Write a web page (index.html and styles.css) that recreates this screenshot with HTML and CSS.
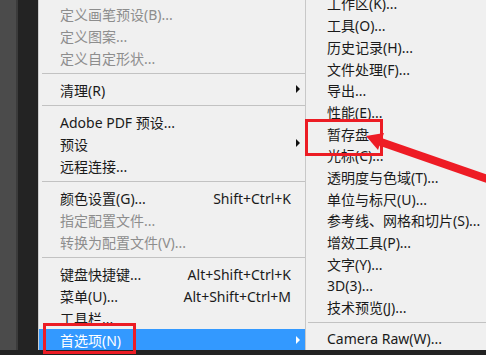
FILE: index.html
```html
<!DOCTYPE html>
<html>
<head>
<title>首选项菜单</title>
<link rel="stylesheet" href="styles.css">
</head>
<body>

<div class="workspace">
  <div class="side-panel"></div>
  <div class="side-edge"></div>
  <div class="side-gutter"></div>

  <div class="menu menu-main">
    <div class="menu-item disabled"><span class="label">定义画笔预设(B)...</span></div>
    <div class="menu-item disabled"><span class="label">定义图案...</span></div>
    <div class="menu-item disabled"><span class="label">定义自定形状...</span></div>
    <div class="menu-sep"></div>
    <div class="menu-item"><span class="label">清理(R)</span><span class="sub"></span></div>
    <div class="menu-sep"></div>
    <div class="menu-item"><span class="label">Adobe PDF 预设...</span><span class="sub none"></span></div>
    <div class="menu-item"><span class="label">预设</span><span class="sub"></span></div>
    <div class="menu-item"><span class="label">远程连接...</span><span class="sub none"></span></div>
    <div class="menu-sep"></div>
    <div class="menu-item"><span class="label">颜色设置(G)...</span><span class="keys">Shift+Ctrl+K</span><span class="sub none"></span></div>
    <div class="menu-item disabled"><span class="label">指定配置文件...</span></div>
    <div class="menu-item disabled"><span class="label">转换为配置文件(V)...</span></div>
    <div class="menu-sep"></div>
    <div class="menu-item"><span class="label">键盘快捷键...</span><span class="keys">Alt+Shift+Ctrl+K</span><span class="sub none"></span></div>
    <div class="menu-item"><span class="label">菜单(U)...</span><span class="keys">Alt+Shift+Ctrl+M</span><span class="sub none"></span></div>
    <div class="menu-item"><span class="label">工具栏...</span></div>
    <div class="menu-item active"><span class="label">首选项(N)</span><span class="sub"></span></div>
  </div>

  <div class="menu menu-prefs">
    <div class="menu-item"><span class="label">工作区(K)...</span></div>
    <div class="menu-item"><span class="label">工具(O)...</span></div>
    <div class="menu-item"><span class="label">历史记录(H)...</span></div>
    <div class="menu-item"><span class="label">文件处理(F)...</span></div>
    <div class="menu-item"><span class="label">导出...</span></div>
    <div class="menu-item"><span class="label">性能(E)...</span></div>
    <div class="menu-item"><span class="label">暂存盘...</span></div>
    <div class="menu-item"><span class="label">光标(C)...</span></div>
    <div class="menu-item"><span class="label">透明度与色域(T)...</span></div>
    <div class="menu-item"><span class="label">单位与标尺(U)...</span></div>
    <div class="menu-item"><span class="label">参考线、网格和切片(S)...</span></div>
    <div class="menu-item"><span class="label">增效工具(P)...</span></div>
    <div class="menu-item"><span class="label">文字(Y)...</span></div>
    <div class="menu-item"><span class="label">3D(3)...</span></div>
    <div class="menu-item"><span class="label">技术预览(J)...</span></div>
    <div class="menu-sep"></div>
    <div class="menu-item"><span class="label">Camera Raw(W)...</span></div>
  </div>
</div>

<!-- red annotations drawn over the screenshot -->
<div class="mark mark-prefs"></div>
<div class="mark mark-scratch"></div>
<svg class="pointer" width="486" height="355" viewBox="0 0 486 355">
  <line x1="490" y1="180" x2="378" y2="141" stroke="#ee1c25" stroke-width="8"/>
  <polygon points="366,136 384,133 378,150" fill="#ee1c25"/>
</svg>

</body>
</html>
```

FILE: styles.css
```css
body {
  margin: 0;
  background: #222;
  font-family: "Noto Sans", "Noto Sans CJK SC", sans-serif;
  font-size: 14px;
  color: #1a1a1a;
  overflow: hidden;
}

.workspace {
  display: flex;
  height: 350px;
}

.side-panel {
  width: 16px;
  background: #4b4b4b;
}

.side-edge {
  width: 2px;
  background: #3b3b3b;
}

.side-gutter {
  width: 20px;
  background: #232323;
}

.menu {
  display: flex;
  flex-direction: column;
  background: #f0f0f0;
  overflow: hidden;
}

.menu-main {
  width: 266px;
  padding-top: 3px;
  border-left: 1px solid #cdcdcd;
  border-right: 1px solid #c8c8c8;
}

.menu-prefs {
  flex: 1;
}

.menu-item {
  display: flex;
  align-items: center;
  flex-shrink: 0;
  height: 22px;
  padding-left: 21px;
  white-space: nowrap;
}

.menu-prefs .menu-item {
  height: 21.7px;
}

.menu-prefs .menu-item:first-child {
  margin-top: -7.4px;
}

.menu-item .label {
  flex: 1;
}

.menu-item .keys {
  padding-right: 2px;
}

.menu-item .sub {
  width: 12px;
  height: 22px;
  flex-shrink: 0;
  position: relative;
}

.menu-item .sub::after {
  content: "";
  position: absolute;
  left: 3px;
  top: 6px;
  border-top: 4px solid transparent;
  border-bottom: 4px solid transparent;
  border-left: 4px solid #111;
}

.menu-item .sub.none::after {
  display: none;
}

.menu-item.disabled {
  color: #8d8d8d;
}

.menu-item.active {
  background: #3399ff;
  color: #fff;
}

.menu-item.active .sub::after {
  border-left-color: #fff;
  top: 7px;
}

.menu-sep {
  flex-shrink: 0;
  height: 1px;
  margin: 4px 0 5px 3px;
  background: #c2c2c2;
}

.menu-prefs .menu-sep {
  margin: 4px 0 5px 2px;
}

/* annotations */
.mark {
  position: absolute;
  border: 3px solid #ec1c24;
  box-sizing: border-box;
}

.mark-prefs {
  left: 43px;
  top: 323px;
  width: 93px;
  height: 31px;
}

.mark-scratch {
  left: 305px;
  top: 119px;
  width: 78px;
  height: 37px;
}

.pointer {
  position: absolute;
  left: 0;
  top: 0;
}
```
